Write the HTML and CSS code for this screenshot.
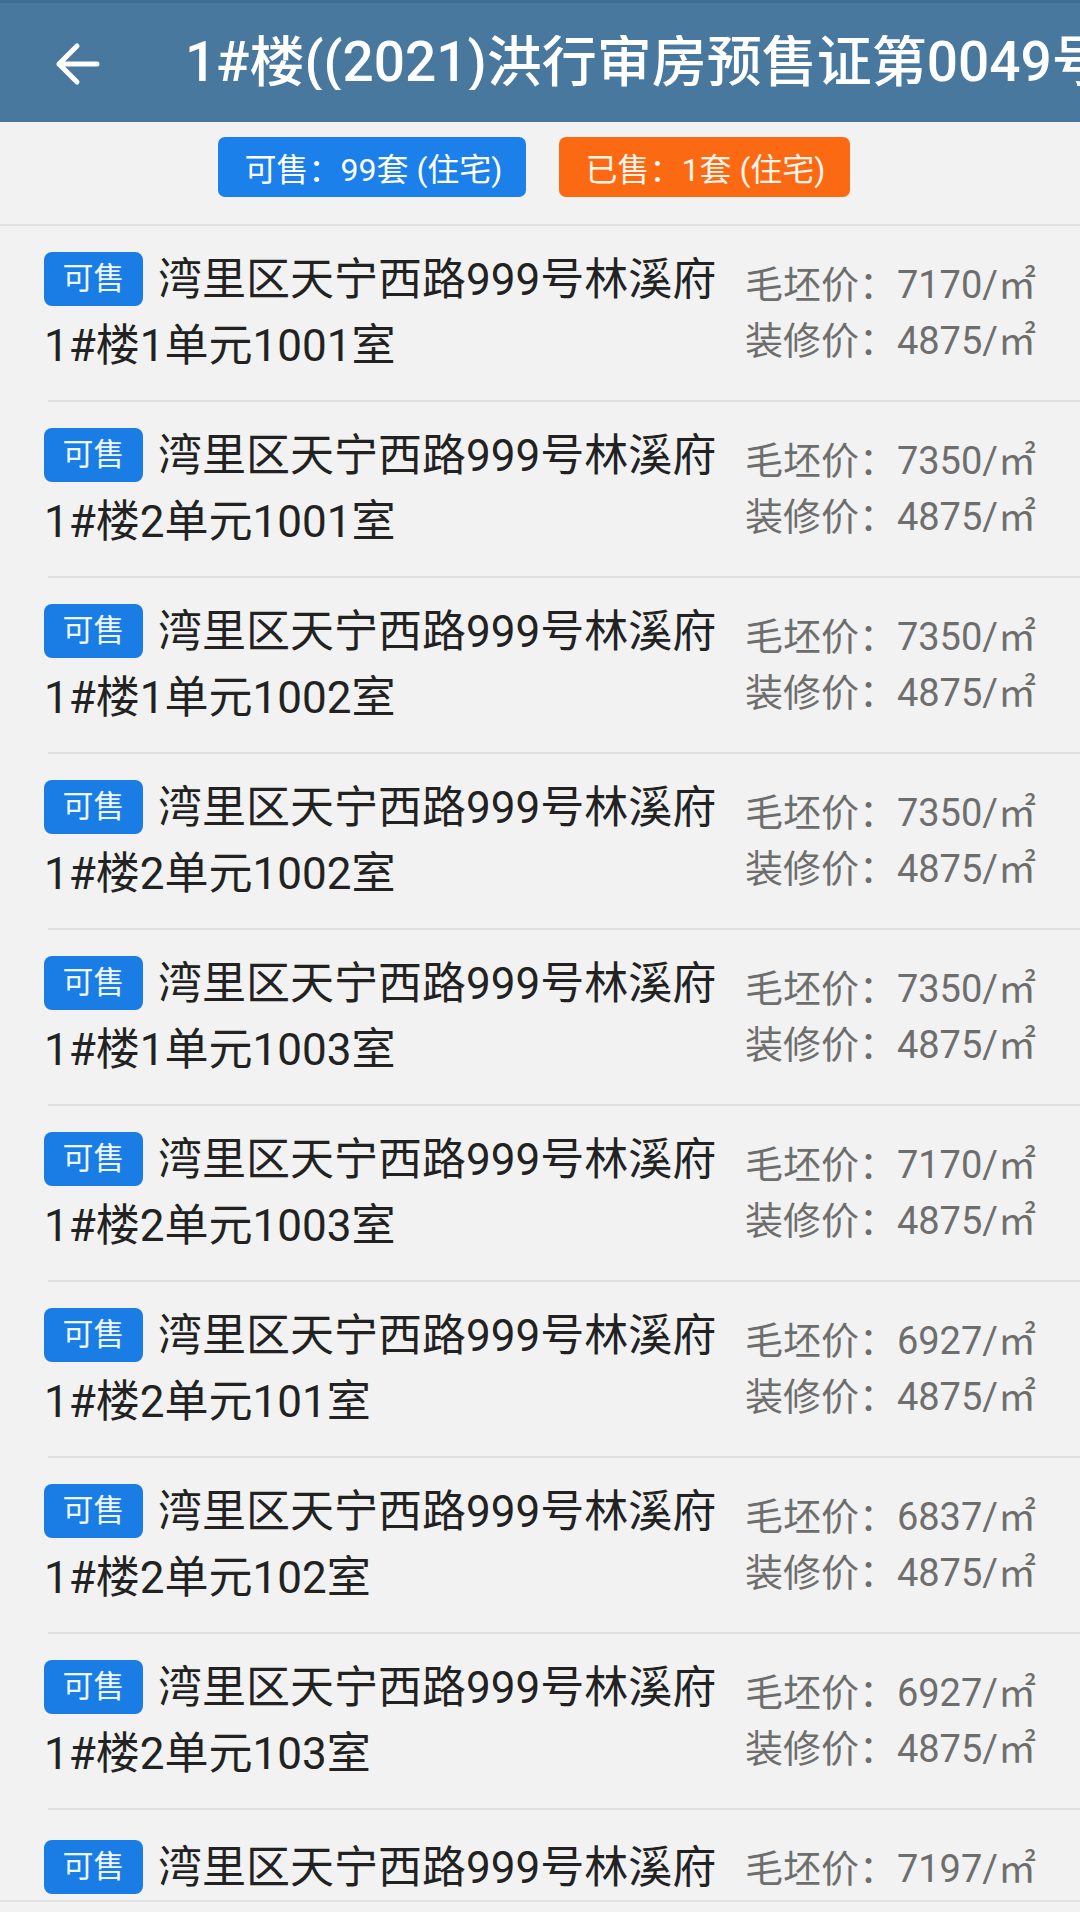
FILE: index.html
```html
<!DOCTYPE html>
<html lang="zh-CN">
<head>
<meta charset="utf-8">
<title>1#楼((2021)洪行审房预售证第0049号)</title>
<link rel="stylesheet" href="styles.css">
</head>
<body>
<div class="screen">
  <header class="topbar">
    <svg class="back" width="46" height="44" viewBox="0 0 46 44">
      <path d="M43 22 H5 M23 4 L5 22 L23 40" fill="none" stroke="#ffffff" stroke-width="5" stroke-linecap="round" stroke-linejoin="round"/>
    </svg>
    <div class="title">1#楼((2021)洪行审房预售证第0049号)</div>
  </header>

  <div class="summary">
    <span class="chip chip-blue">可售：99套 (住宅)</span>
    <span class="chip chip-orange">已售：1套 (住宅)</span>
  </div>

  <div class="list">
    <div class="row">
      <div class="addr"><span class="badge">可售</span>湾里区天宁西路999号林溪府<br>1#楼1单元1001室</div>
      <div class="price"><div>毛坯价：7170/㎡</div><div>装修价：4875/㎡</div></div>
    </div>
    <div class="sep"></div>
    <div class="row">
      <div class="addr"><span class="badge">可售</span>湾里区天宁西路999号林溪府<br>1#楼2单元1001室</div>
      <div class="price"><div>毛坯价：7350/㎡</div><div>装修价：4875/㎡</div></div>
    </div>
    <div class="sep"></div>
    <div class="row">
      <div class="addr"><span class="badge">可售</span>湾里区天宁西路999号林溪府<br>1#楼1单元1002室</div>
      <div class="price"><div>毛坯价：7350/㎡</div><div>装修价：4875/㎡</div></div>
    </div>
    <div class="sep"></div>
    <div class="row">
      <div class="addr"><span class="badge">可售</span>湾里区天宁西路999号林溪府<br>1#楼2单元1002室</div>
      <div class="price"><div>毛坯价：7350/㎡</div><div>装修价：4875/㎡</div></div>
    </div>
    <div class="sep"></div>
    <div class="row">
      <div class="addr"><span class="badge">可售</span>湾里区天宁西路999号林溪府<br>1#楼1单元1003室</div>
      <div class="price"><div>毛坯价：7350/㎡</div><div>装修价：4875/㎡</div></div>
    </div>
    <div class="sep"></div>
    <div class="row">
      <div class="addr"><span class="badge">可售</span>湾里区天宁西路999号林溪府<br>1#楼2单元1003室</div>
      <div class="price"><div>毛坯价：7170/㎡</div><div>装修价：4875/㎡</div></div>
    </div>
    <div class="sep"></div>
    <div class="row">
      <div class="addr"><span class="badge">可售</span>湾里区天宁西路999号林溪府<br>1#楼2单元101室</div>
      <div class="price"><div>毛坯价：6927/㎡</div><div>装修价：4875/㎡</div></div>
    </div>
    <div class="sep"></div>
    <div class="row">
      <div class="addr"><span class="badge">可售</span>湾里区天宁西路999号林溪府<br>1#楼2单元102室</div>
      <div class="price"><div>毛坯价：6837/㎡</div><div>装修价：4875/㎡</div></div>
    </div>
    <div class="sep"></div>
    <div class="row">
      <div class="addr"><span class="badge">可售</span>湾里区天宁西路999号林溪府<br>1#楼2单元103室</div>
      <div class="price"><div>毛坯价：6927/㎡</div><div>装修价：4875/㎡</div></div>
    </div>
    <div class="sep"></div>
    <div class="row row-last">
      <div class="addr"><span class="badge">可售</span>湾里区天宁西路999号林溪府</div>
      <div class="price"><div>毛坯价：7197/㎡</div></div>
    </div>
  </div>
</div>
</body>
</html>
```

FILE: styles.css
```css
html, body {
  margin: 0;
  padding: 0;
}

body {
  background: #f2f2f2;
  font-family: Roboto, "Noto Sans CJK SC", "Noto Sans", sans-serif;
}

.screen {
  width: 1080px;
  height: 1900px;
  overflow: hidden;
  background: #f2f2f2;
  border-bottom: 2px solid #e2e2e2;
}

.topbar {
  height: 119px;
  border-top: 3px solid #3f6d93;
  background: #49789f;
  display: flex;
  align-items: center;
  padding-left: 54px;
  overflow: hidden;
}

.back {
  flex: none;
  display: block;
  margin-top: 2px;
}

.title {
  margin-left: 85px;
  color: #ffffff;
  font-size: 55px;
  font-weight: 500;
  white-space: nowrap;
  overflow: hidden;
  flex: none;
  line-height: 1;
}

.summary {
  height: 60px;
  padding: 15px 12px 27px 0;
  display: flex;
  justify-content: center;
  gap: 33px;
  border-bottom: 2px solid #e1e1e1;
}

.chip {
  height: 60px;
  display: flex;
  align-items: center;
  padding: 0 24px 0 26px;
  border-radius: 7px;
  color: #ffffff;
  font-size: 32px;
  white-space: nowrap;
}

.chip-blue {
  background: #1b80ea;
}

.chip-orange {
  background: #fb6a12;
  color: #fff4ea;
}

.row {
  height: 132px;
  padding: 21px 44px 21px 44px;
  display: flex;
  align-items: center;
}

.row-last {
  align-items: flex-start;
  padding-top: 25px;
}

.row-last .price {
  padding-top: 6px;
}

.addr {
  flex: 1;
  font-size: 44px;
  line-height: 66px;
  color: #222222;
  white-space: nowrap;
}

.badge {
  display: inline-block;
  width: 99px;
  height: 54px;
  line-height: 54px;
  text-align: center;
  border-radius: 8px;
  background: #1a7de6;
  color: #eef7ff;
  font-size: 31px;
  margin-right: 15px;
  vertical-align: 6px;
}

.price {
  flex: none;
  font-size: 38px;
  line-height: 56px;
  color: #6e6e6e;
  white-space: nowrap;
}

.sep {
  height: 2px;
  margin-left: 48px;
  background: #e0e0e0;
}
```
